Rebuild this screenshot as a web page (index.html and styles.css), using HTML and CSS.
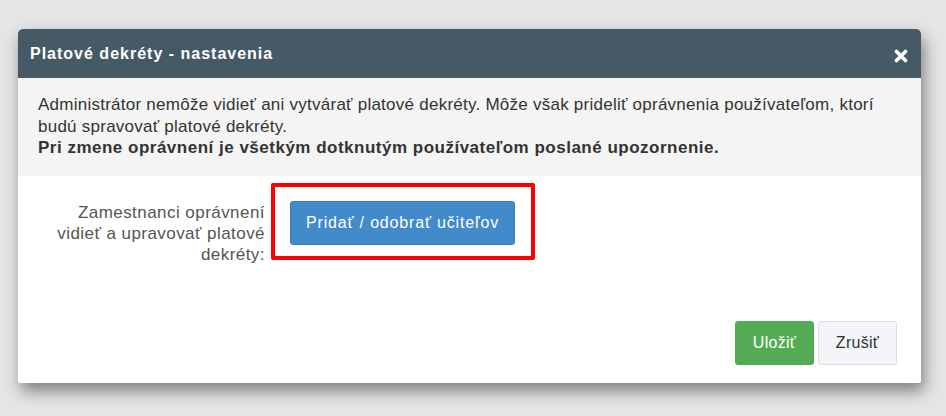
FILE: index.html
```html
<!DOCTYPE html>
<html lang="sk">
<head>
<meta charset="utf-8">
<title>Platové dekréty - nastavenia</title>
<link rel="stylesheet" href="styles.css">
</head>
<body>
<div class="modal">
  <div class="modal-header">
    <h4 class="modal-title">Platové dekréty - nastavenia</h4>
    <button class="close" aria-label="Zavrieť">
      <svg width="14" height="14" viewBox="0 0 14 14"><path d="M2.5 2.5 L11.5 11.5 M11.5 2.5 L2.5 11.5" stroke="#fff" stroke-width="3.6" stroke-linecap="round"/></svg>
    </button>
  </div>
  <div class="info">
    Administrátor nemôže vidieť ani vytvárať platové dekréty. Môže však prideliť oprávnenia používateľom, ktorí budú spravovať platové dekréty.<br>
    <strong>Pri zmene oprávnení je všetkým dotknutým používateľom poslané upozornenie.</strong>
  </div>
  <div class="modal-body">
    <div class="form-row">
      <label class="form-label">Zamestnanci oprávnení vidieť a upravovať platové dekréty:</label>
      <div class="highlight">
        <button class="btn btn-primary">Pridať / odobrať učiteľov</button>
      </div>
    </div>
  </div>
  <div class="modal-footer">
    <button class="btn btn-success">Uložiť</button>
    <button class="btn btn-default">Zrušiť</button>
  </div>
</div>
</body>
</html>
```
FILE: styles.css
```css
html, body {
  margin: 0;
  padding: 0;
}
body {
  background: #e5e5e5;
  font-family: "Liberation Sans", Arial, sans-serif;
  font-size: 16px;
  color: #333;
  height: 416px;
  overflow: hidden;
}
.modal {
  margin: 29px 0 0 18px;
  width: 903px;
  background: #fff;
  border-radius: 5px 5px 2px 2px;
  box-shadow: 3px 8px 16px rgba(0, 0, 0, 0.45);
}
.modal-header {
  height: 49px;
  background: #465a66;
  border-radius: 5px 5px 0 0;
  display: flex;
  align-items: center;
  justify-content: space-between;
  padding: 0 13px 0 12px;
  box-sizing: border-box;
}
.modal-title {
  margin: 0;
  color: #fff;
  font-size: 16px;
  font-weight: bold;
  line-height: 20px;
  letter-spacing: 1px;
}
.close {
  border: 0;
  background: none;
  padding: 0;
  margin-top: 4px;
  width: 14px;
  height: 14px;
  display: flex;
}
.info {
  background: #f4f4f4;
  padding: 16px 20px 17px 20px;
  font-size: 17px;
  letter-spacing: 0.25px;
  line-height: 21.5px;
  color: #333;
}
.info strong {
  font-weight: bold;
  letter-spacing: 0.5px;
}
.modal-body {
  padding: 7px 20px 0 20px;
}
.form-row {
  display: flex;
  align-items: flex-start;
}
.form-label {
  width: 233px;
  box-sizing: border-box;
  padding: 19px 6px 0 10px;
  text-align: right;
  color: #555;
  font-size: 17px;
  letter-spacing: 0.45px;
  line-height: 21px;
}
.highlight {
  border: 4px solid #ff0000;
  padding: 14px 16px 11px 15px;
  border-radius: 2px;
}
.btn {
  font-family: "Liberation Sans", Arial, sans-serif;
  font-size: 16px;
  border-radius: 3px;
  border: 1px solid transparent;
  height: 44px;
  line-height: 20px;
  padding: 0 6px;
  cursor: pointer;
}
.btn-primary {
  width: 225px;
  background: #428bca;
  border-color: #357ebd;
  color: #fff;
  letter-spacing: 0.83px;
}
.btn-success {
  width: 79px;
  background: #55ab55;
  border-color: #4cae4c;
  color: #fff;
  letter-spacing: 0.3px;
}
.btn-default {
  width: 79px;
  background: #f4f5f8;
  border-color: #dddddd;
  color: #333;
  letter-spacing: 0.3px;
}
.modal-footer {
  display: flex;
  justify-content: flex-end;
  gap: 4px;
  padding: 56px 24px 18px 0;
}
```
